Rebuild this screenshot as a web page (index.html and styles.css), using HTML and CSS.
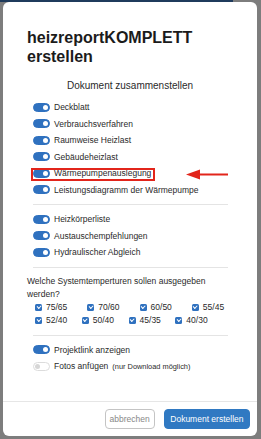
FILE: index.html
```html
<!DOCTYPE html>
<html lang="de">
<head>
    <meta charset="UTF-8">
    <meta name="viewport" content="width=device-width, initial-scale=1.0">
    <title>heizreportKOMPLETT erstellen</title>
    <link rel="stylesheet" href="styles.css">
</head>
<body>
    <div class="modal">
        <div class="modal-body">
            <h1 class="title">heizreportKOMPLETT erstellen</h1>
            <h2 class="subtitle">Dokument zusammenstellen</h2>

            <div class="switch-group">
                <label class="switch-row"><span class="switch on"></span>Deckblatt</label>
                <label class="switch-row"><span class="switch on"></span>Verbrauchsverfahren</label>
                <label class="switch-row"><span class="switch on"></span>Raumweise Heizlast</label>
                <label class="switch-row"><span class="switch on"></span>Gebäudeheizlast</label>
                <label class="switch-row"><span class="switch on"></span>Wärmepumpenauslegung
                    <span class="mark"></span>
                    <svg class="arrow" width="43" height="11" viewBox="0 0 43 11">
                        <path d="M12 5.5H42" stroke="#e2251b" stroke-width="2"/>
                        <path d="M0 5.5L14 0.5V10.5Z" fill="#e2251b"/>
                    </svg>
                </label>
                <label class="switch-row"><span class="switch on"></span>Leistungsdiagramm der Wärmepumpe</label>
            </div>

            <hr class="divider">

            <div class="switch-group">
                <label class="switch-row"><span class="switch on"></span>Heizkörperliste</label>
                <label class="switch-row"><span class="switch on"></span>Austauschempfehlungen</label>
                <label class="switch-row"><span class="switch on"></span>Hydraulischer Abgleich</label>
            </div>

            <hr class="divider">

            <p class="question">Welche Systemtemperturen sollen ausgegeben werden?</p>
            <div class="temp-row">
                <label class="temp"><span class="check"></span>75/65</label>
                <label class="temp"><span class="check"></span>70/60</label>
                <label class="temp"><span class="check"></span>60/50</label>
                <label class="temp"><span class="check"></span>55/45</label>
            </div>
            <div class="temp-row tight">
                <label class="temp"><span class="check"></span>52/40</label>
                <label class="temp"><span class="check"></span>50/40</label>
                <label class="temp"><span class="check"></span>45/35</label>
                <label class="temp"><span class="check"></span>40/30</label>
            </div>

            <hr class="divider wide">

            <div class="switch-group">
                <label class="switch-row"><span class="switch on"></span>Projektlink anzeigen</label>
                <label class="switch-row"><span class="switch"></span>Fotos anfügen <small class="hint">(nur Download möglich)</small></label>
            </div>
        </div>
        <div class="modal-footer">
            <button class="btn btn-light">abbrechen</button>
            <button class="btn btn-primary">Dokument erstellen</button>
        </div>
    </div>
</body>
</html>
```

FILE: styles.css
```css
html, body {
    height: 100%;
}

body {
    margin: 0;
    padding: 2px 4px 3px 3px;
    box-sizing: border-box;
    background: linear-gradient(#1f3b5c, #1f3b5c) no-repeat 0 0 / 233px 2px, #7d7d7d;
    font-family: "Liberation Sans", Arial, sans-serif;
    color: #2a2a2a;
}

.modal {
    width: 254px;
    height: 434px;
    background: #fff;
    border-radius: 6px;
    display: flex;
    flex-direction: column;
}

.modal-body {
    flex: 1;
    padding: 26px 24px 0;
}

.title {
    margin: 0;
    font-size: 16px;
    line-height: 19px;
    font-weight: bold;
    color: #1b1b1b;
}

.subtitle {
    margin: 13px 0 0;
    font-size: 10px;
    line-height: 14px;
    font-weight: normal;
    text-align: center;
    color: #2a2a2a;
}

.switch-group {
    margin-top: 6px;
    padding-left: 6px;
}

.switch-row {
    position: relative;
    display: flex;
    align-items: center;
    gap: 4px;
    height: 16.5px;
    font-size: 8.5px;
    color: #2a2a2a;
}

.switch {
    position: relative;
    width: 17px;
    height: 9px;
    box-sizing: border-box;
    border-radius: 5px;
    border: 1px solid #dcdcdc;
    background: #fff;
    flex-shrink: 0;
}

.switch::after {
    content: "";
    position: absolute;
    top: 1px;
    left: 1px;
    width: 5px;
    height: 5px;
    border-radius: 50%;
    background: #d6d6d6;
}

.switch.on {
    background: #2f71bf;
    border-color: #2f71bf;
}

.switch.on::after {
    left: auto;
    right: 1px;
    background: #fff;
}

.mark {
    position: absolute;
    left: -2px;
    top: 3px;
    width: 124px;
    height: 13px;
    box-sizing: border-box;
    border: 2px solid #e2251b;
}

.arrow {
    position: absolute;
    left: 153px;
    top: 4px;
}

.divider {
    border: 0;
    border-top: 1px solid #e4e4e4;
    margin: 6px 5px 0 6px;
}

.divider.wide {
    margin-top: 8px;
}

.question {
    margin: 7px 0 0;
    font-size: 8.5px;
    line-height: 13px;
    color: #2a2a2a;
}

.temp-row {
    display: flex;
    gap: 20px;
    padding-left: 8px;
    height: 13px;
    align-items: center;
}

.temp-row.tight {
    gap: 14.5px;
}

.temp {
    display: flex;
    align-items: center;
    gap: 4px;
    font-size: 8.5px;
    color: #2a2a2a;
}

.check {
    position: relative;
    width: 7px;
    height: 7px;
    border-radius: 1.5px;
    background: #2f71bf;
}

.check::after {
    content: "";
    position: absolute;
    left: 1.6px;
    top: 1.4px;
    width: 3px;
    height: 1.6px;
    border: solid #fff;
    border-width: 0 0 1.1px 1.1px;
    transform: rotate(-45deg);
}

.hint {
    font-size: 7.4px;
}

.modal-footer {
    display: flex;
    justify-content: flex-end;
    gap: 9px;
    padding: 7px;
    border-top: 1px solid #e6e6e6;
}

.btn {
    height: 20px;
    border-radius: 4px;
    font-family: inherit;
    font-size: 8.5px;
    cursor: pointer;
}

.btn-light {
    padding: 0 4px;
    background: #fff;
    border: 1px solid #c4c4c4;
    color: #888;
}

.btn-primary {
    padding: 0 5.5px;
    background: #3079c2;
    border: 1px solid #3079c2;
    color: #fff;
}
```
